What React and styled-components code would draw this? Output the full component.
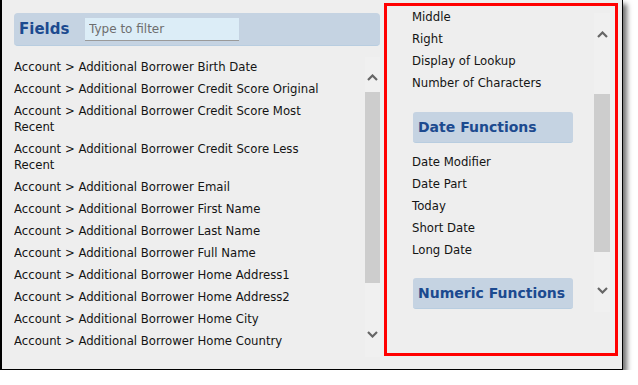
import React from "react";
import styled, { createGlobalStyle } from "styled-components";

const GlobalStyle = createGlobalStyle`
  html, body { margin: 0; padding: 0; background: #ffffff; }
  body { font-family: "DejaVu Sans", Verdana, sans-serif; }
  * { box-sizing: border-box; }
`;

const Window = styled.div`
  width: 623px;
  height: 370px;
  display: flex;
  background: #eeeeee;
  border-left: 2px solid #000;
  border-right: 1px solid #000;
  border-bottom: 1px solid #000;
  box-shadow: 4px 4px 5px rgba(0, 0, 0, 0.55);
`;

const LeftPanel = styled.div`
  width: 378px;
  display: flex;
  flex-direction: column;
  padding: 13px 0 12px 12px;
`;

const HeaderBar = styled.div`
  height: 33px;
  display: flex;
  align-items: center;
  padding-left: 5px;
  background: #c5d3e2;
  border-radius: 4px;
  border-bottom: 1px solid #b8cde0;
`;

const Title = styled.div`
  font-weight: bold;
  font-size: 15px;
  color: #1c4a8f;
  width: 66px;
  white-space: nowrap;
`;

const FilterInput = styled.input`
  width: 154px;
  height: 23px;
  border: none;
  border-bottom: 1px solid #9a9a9a;
  background: #dcedf7;
  padding: 0 4px;
  font-family: inherit;
  font-size: 12px;
  color: #222;
  outline: none;
  &::placeholder { color: #6e6e6e; }
`;

const ListArea = styled.div`
  flex: 1;
  display: flex;
  margin-top: 10px;
  min-height: 0;
`;

const ListColumn = styled.div`
  flex: 1;
  overflow: hidden;
  padding-right: 29px;
`;

const Item = styled.div`
  font-size: 11.7px;
  line-height: 16px;
  padding: 3px 0;
  color: #141414;
`;

const Track = styled.div`
  width: ${(p) => p.$w}px;
  margin: ${(p) => p.$top}px ${(p) => p.$right || 0}px 0 0;
  height: ${(p) => p.$h}px;
  display: flex;
  flex-direction: column;
  align-items: center;
  background: #f0f0f0;
`;

const Thumb = styled.div`
  width: 100%;
  background: #cdcdcd;
  flex: none;
`;

const Spacer = styled.div`
  flex: 1;
`;

const ArrowIcon = styled.svg`
  flex: none;
  display: block;
`;

const Chevron = ({ up, style }) => (
  <ArrowIcon width="11" height="7" viewBox="0 0 11 7" style={style}>
    <path
      d={up ? "M1 6 L5.5 1.5 L10 6" : "M1 1 L5.5 5.5 L10 1"}
      fill="none"
      stroke="#666"
      strokeWidth="2.2"
    />
  </ArrowIcon>
);

const ScrollBar = ({ w, h, top, right, upTop, thumbGap, thumbH, downBottom }) => (
  <Track $w={w} $h={h} $top={top} $right={right}>
    <Chevron up style={{ marginTop: upTop }} />
    <Thumb style={{ marginTop: thumbGap, height: thumbH }} />
    <Spacer />
    <Chevron style={{ marginBottom: downBottom }} />
  </Track>
);

const RightPanel = styled.div`
  width: 234px;
  height: 353px;
  margin: 3px 0 0 4px;
  border: 3px solid #ff0000;
  display: flex;
  align-items: flex-start;
`;

const FuncColumn = styled.div`
  flex: 1;
  height: 306px;
  overflow: hidden;
  padding-left: 25px;
`;

const SectionHead = styled.div`
  width: 160px;
  height: 31px;
  margin: ${(p) => p.$mt}px 0 8px 1px;
  padding-left: 5px;
  display: flex;
  align-items: center;
  background: #c5d3e2;
  border-radius: 3px;
  border-bottom: 1px solid #b8cde0;
  font-weight: bold;
  font-size: 14px;
  color: #1c4a8f;
  white-space: nowrap;
`;

const fields = [
  "Account > Additional Borrower Birth Date",
  "Account > Additional Borrower Credit Score Original",
  "Account > Additional Borrower Credit Score Most Recent",
  "Account > Additional Borrower Credit Score Less Recent",
  "Account > Additional Borrower Email",
  "Account > Additional Borrower First Name",
  "Account > Additional Borrower Last Name",
  "Account > Additional Borrower Full Name",
  "Account > Additional Borrower Home Address1",
  "Account > Additional Borrower Home Address2",
  "Account > Additional Borrower Home City",
  "Account > Additional Borrower Home Country",
];

const textFns = ["Middle", "Right", "Display of Lookup", "Number of Characters"];
const dateFns = ["Date Modifier", "Date Part", "Today", "Short Date", "Long Date"];

export default function App() {
  return (
    <>
      <GlobalStyle />
      <Window>
        <LeftPanel>
          <HeaderBar>
            <Title>Fields</Title>
            <FilterInput placeholder="Type to filter" />
          </HeaderBar>
          <ListArea>
            <ListColumn>
              {fields.map((f) => (
                <Item key={f}>{f}</Item>
              ))}
            </ListColumn>
            <ScrollBar w={15} h={300} top={1} upTop={17} thumbGap={11} thumbH={191} downBottom={19} />
          </ListArea>
        </LeftPanel>
        <RightPanel>
          <FuncColumn>
            {textFns.map((f) => (
              <Item key={f}>{f}</Item>
            ))}
            <SectionHead $mt={18}>Date Functions</SectionHead>
            {dateFns.map((f) => (
              <Item key={f}>{f}</Item>
            ))}
            <SectionHead $mt={17}>Numeric Functions</SectionHead>
          </FuncColumn>
          <ScrollBar w={16} h={299} top={7} right={5} upTop={18} thumbGap={56} thumbH={158} downBottom={18} />
        </RightPanel>
      </Window>
    </>
  );
}
